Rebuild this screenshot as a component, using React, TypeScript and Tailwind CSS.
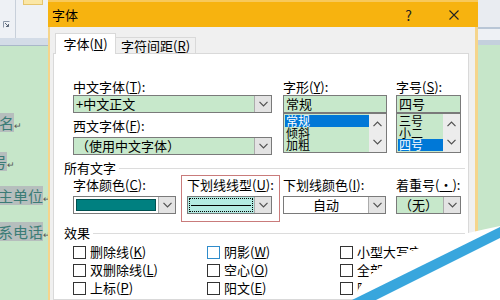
import React from 'react';

function cn(...c: (string | false | undefined)[]) {
  return c.filter(Boolean).join(' ');
}

function Key({ k }: { k: string }) {
  return (
    <>
      (<span className="underline">{k}</span>)
    </>
  );
}

function Chevron({ up = false }: { up?: boolean }) {
  return (
    <svg width="9" height="6" viewBox="0 0 9 6">
      <path
        d={up ? 'M0.5 5.2 L4.5 1.2 L8.5 5.2' : 'M0.5 0.8 L4.5 4.8 L8.5 0.8'}
        fill="none"
        stroke="#505050"
        strokeWidth="1.2"
      />
    </svg>
  );
}

function DropButton() {
  return (
    <div className="w-[17px] shrink-0 h-full bg-[#e3e3e3] border-l border-[#acacac] flex items-center justify-center">
      <Chevron />
    </div>
  );
}

function Combo({ text, bg, center }: { text: string; bg: string; center?: boolean }) {
  return (
    <div className={cn('flex h-[18px] border border-[#7a7a7a]', bg)}>
      <div className={cn('flex-1 leading-[16px] whitespace-nowrap overflow-hidden', center ? 'text-center' : 'pl-[2px]')}>
        {text}
      </div>
      <DropButton />
    </div>
  );
}

function ListBox({ items, selected }: { items: string[]; selected: number }) {
  return (
    <div className="flex h-[40px] border border-[#7a7a7a] bg-[#c7e8cb]">
      <div className="flex-1 pt-[1px] pl-[1px] text-[12px]">
        {items.map((it, i) => (
          <div
            key={it}
            className={cn('h-[12px] leading-[12px] pl-[1px] overflow-hidden', i === selected && 'bg-[#0078d7] text-white')}
          >
            {it}
          </div>
        ))}
      </div>
      <div className="w-[17px] bg-[#ececec] flex flex-col items-center justify-between py-[7px]">
        <Chevron up />
        <Chevron />
      </div>
    </div>
  );
}

function Check({ label, k, blue }: { label: string; k: string; blue?: boolean }) {
  return (
    <div className="flex items-center h-[18px] gap-[4px] whitespace-nowrap">
      <div className={cn('w-[13px] h-[13px] border bg-white', blue ? 'border-[#2f8ccb]' : 'border-[#333333]')} />
      <span className="leading-[16px]">
        {label}
        <Key k={k} />
      </span>
    </div>
  );
}

function Section({ title }: { title: string }) {
  return (
    <div className="flex items-center h-[16px]">
      <span className="leading-[16px]">{title}</span>
      <div className="flex-1 h-px bg-[#dcdcdc] ml-[3px]" />
    </div>
  );
}

function DocLeft() {
  return (
    <div className="w-[48px] h-full shrink-0 overflow-hidden flex flex-col">
      <div className="h-[38px] shrink-0 bg-[#eef1f5] flex">
        <div className="w-[15px] flex flex-col justify-end pb-[10px] pl-[3px]">
          <svg width="7" height="7" viewBox="0 0 7 7">
            <path d="M0.5 6.5 V0.5 H6.5" fill="none" stroke="#8a96a6" />
            <path d="M2 2 L5.5 5.5 M3 5.5 H5.5 V3" fill="none" stroke="#5c6878" />
          </svg>
        </div>
        <div className="w-px h-full bg-[#c8d0da]" />
        <div className="ml-[7px] w-[20px] h-[5px] bg-[#fbe7a6] border-x border-b border-[#e6c56d]" />
      </div>
      <div className="h-[8px] shrink-0 bg-[#d3dce7] border-b border-[#a9b8c9]" />
      <div className="flex flex-col text-[15px] leading-[19px] text-[#3b7c76] whitespace-nowrap">
        <div className="mt-[67px] ml-[-1px] flex items-end">
          <span className="bg-[#b6bebd]">名</span>
          <span className="text-[9px] leading-[12px] text-[#555]">↵</span>
        </div>
        <div className="mt-[20px] ml-[-8px] flex items-end">
          <span className="bg-[#b6bebd]">号</span>
          <span className="text-[9px] leading-[12px] text-[#555]">↵</span>
        </div>
        <div className="mt-[15px] ml-[-2px] flex items-end">
          <span className="bg-[#b6bebd]">主单位</span>
          <span className="text-[9px] leading-[12px] text-[#555]">↵</span>
        </div>
        <div className="mt-[17px] ml-[-2px] flex items-end">
          <span className="bg-[#b6bebd]">系电话</span>
          <span className="text-[9px] leading-[12px] text-[#555]">↵</span>
        </div>
      </div>
    </div>
  );
}

function DocRight() {
  return (
    <div className="w-[22px] shrink-0 h-full flex flex-col">
      <div className="h-[27px] shrink-0 bg-[#e9ecf1]" />
      <div className="h-[2px] shrink-0 bg-[#b9c6d6]" />
      <div className="h-[11px] shrink-0 bg-[#eef1f5]" />
      <div className="h-[5px] shrink-0 bg-[#c4d0dd]" />
      <div className="flex-1 bg-[#c6e6c9]" />
    </div>
  );
}

function Dialog() {
  return (
    <div className="w-[430px] h-full shrink-0 flex flex-col overflow-hidden">
      <div className="h-[27px] shrink-0 bg-[#f7b30f] border-t-2 border-[#f8c95a] flex items-center pl-[4px] pr-[19px]">
        <span className="leading-[16px]">字体</span>
        <span className="ml-auto text-[14px] leading-[16px] text-[#222]">?</span>
        <svg className="ml-[37px]" width="10" height="10" viewBox="0 0 10 10">
          <path d="M0.5 0.5 L9.5 9.5 M9.5 0.5 L0.5 9.5" stroke="#222" strokeWidth="1.1" />
        </svg>
      </div>
      <div className="flex-1 min-h-0 flex flex-col bg-[#f0f0f0] border-l-2 border-r-[3px] border-[#f5d58c]">
        <div className="shrink-0 flex items-end pt-[6px] pl-[5px]">
          <div className="relative z-10 w-[61px] h-[21px] mb-[-1px] bg-white border-t border-x border-[#d9d9d9] text-center leading-[19px]">
            字体<Key k="N" />
          </div>
          <div className="w-[80px] h-[16px] border-t border-r border-[#d9d9d9] text-center leading-[15px]">
            字符间距<Key k="R" />
          </div>
        </div>
        <div className="ml-[3px] w-[416px] flex-1 min-h-0 overflow-hidden bg-white border border-[#d9d9d9] pt-[25px] pl-[10px] pr-[3px]">
          <div className="flex ml-[9px]">
            <div className="w-[199px]">
              <div className="h-[16px] leading-[16px]">
                中文字体<Key k="T" />:
              </div>
              <Combo text="+中文正文" bg="bg-[#c7e8cb]" />
              <div className="mt-[5px] h-[16px] leading-[16px]">
                西文字体<Key k="F" />:
              </div>
              <div className="mt-[3px]">
                <Combo text="（使用中文字体）" bg="bg-[#c7e8cb]" />
              </div>
            </div>
            <div className="ml-[11px] w-[104px]">
              <div className="h-[16px] leading-[16px]">
                字形<Key k="Y" />:
              </div>
              <div className="h-[18px] border border-[#7a7a7a] bg-[#c7e8cb] pl-[2px] leading-[16px]">常规</div>
              <ListBox items={['常规', '倾斜', '加粗']} selected={0} />
            </div>
            <div className="ml-[9px] w-[65px]">
              <div className="h-[16px] leading-[16px]">
                字号<Key k="S" />:
              </div>
              <div className="h-[18px] border border-[#7a7a7a] bg-[#c7e8cb] pl-[2px] leading-[16px]">四号</div>
              <ListBox items={['三号', '小二', '四号']} selected={2} />
            </div>
          </div>

          <div className="mt-[5px]">
            <Section title="所有文字" />
          </div>

          <div className="flex items-start ml-[9px] mt-[-1px]">
            <div className="w-[103px] pt-[2px]">
              <div className="h-[16px] leading-[16px] whitespace-nowrap">
                字体颜色<Key k="C" />:
              </div>
              <div className="mt-[3px] flex h-[18px] border border-[#7a7a7a] bg-white">
                <div className="flex-1 p-[2px]">
                  <div className="h-full bg-[#008080] border border-[#005050]" />
                </div>
                <DropButton />
              </div>
            </div>
            <div className="ml-[5px] border border-[#c97b7b] pl-[5px] pr-[7px] pt-[1px] pb-[7px]">
              <div className="w-[85px] h-[16px] leading-[16px] whitespace-nowrap">
                下划线线型<Key k="U" />:
              </div>
              <div className="mt-[3px] w-[85px] flex h-[18px] border border-[#7a7a7a] bg-[#b3ebe2]">
                <div className="flex-1 p-[1px]">
                  <div className="h-full border border-dotted border-black flex items-center px-[1px]">
                    <div className="h-px w-full bg-black" />
                  </div>
                </div>
                <DropButton />
              </div>
            </div>
            <div className="ml-[3px] w-[103px] pt-[2px]">
              <div className="h-[16px] leading-[16px] whitespace-nowrap">
                下划线颜色<Key k="I" />:
              </div>
              <div className="mt-[3px]">
                <Combo text="自动" bg="bg-white" center />
              </div>
            </div>
            <div className="ml-[10px] w-[65px] pt-[2px]">
              <div className="h-[16px] leading-[16px] whitespace-nowrap">
                着重号<Key k="·" />:
              </div>
              <div className="mt-[3px]">
                <Combo text="（无）" bg="bg-[#c7e8cb]" />
              </div>
            </div>
          </div>

          <div className="mt-[3px]">
            <Section title="效果" />
          </div>

          <div className="ml-[9px] mt-[2px] grid grid-cols-[134px_133px_1fr]">
            <Check label="删除线" k="K" />
            <Check label="阴影" k="W" blue />
            <Check label="小型大写字母" k="M" />
            <Check label="双删除线" k="L" />
            <Check label="空心" k="O" />
            <Check label="全部大写字母" k="A" />
            <Check label="上标" k="P" />
            <Check label="阳文" k="E" />
            <Check label="隐藏" k="H" />
            <Check label="下标" k="B" />
            <Check label="阴文" k="G" />
          </div>
        </div>
      </div>
    </div>
  );
}

export default function App() {
  return (
    <div className="relative w-[500px] h-[300px] overflow-hidden flex bg-[#c6e6c9] font-['Noto_Sans_CJK_SC','Noto_Sans',sans-serif] text-[13px] text-black">
      <DocLeft />
      <Dialog />
      <DocRight />
      {/* page-curl watermark in the corner */}
      <svg className="absolute inset-0 pointer-events-none" width="500" height="300" viewBox="0 0 500 300">
        <path d="M354 300 C362 268, 410 244, 500 226 L500 300 Z" fill="#ffffff" />
        <polygon points="352,300 500,227 500,238 376,300" fill="#38a6dd" />
      </svg>
    </div>
  );
}
